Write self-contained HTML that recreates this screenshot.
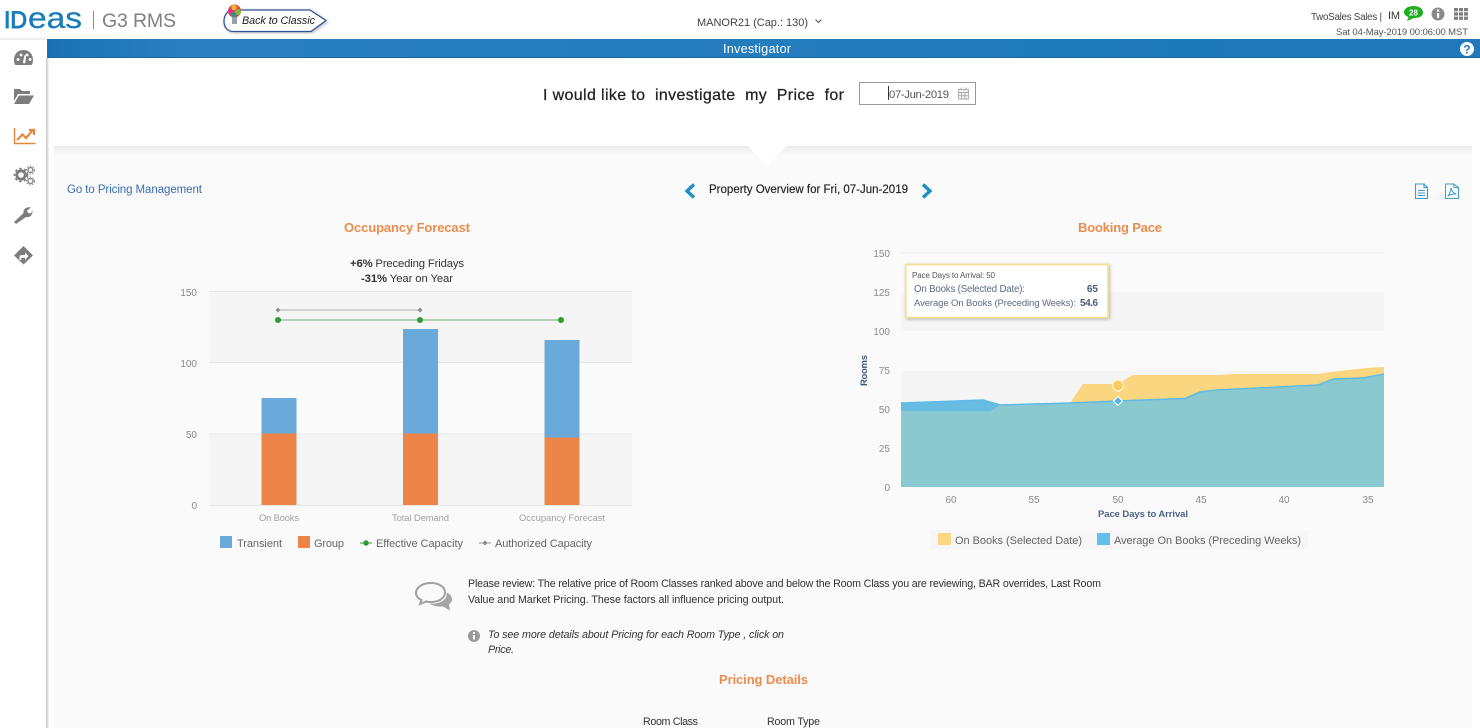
<!DOCTYPE html>
<html><head><meta charset="utf-8"><title>Investigator</title>
<style>html,body{margin:0;padding:0;background:#fff;width:1480px;height:728px;overflow:hidden}svg{display:block}text{font-family:"Liberation Sans",sans-serif}</style></head>
<body>
<svg width="1480" height="728" viewBox="0 0 1480 728" xmlns="http://www.w3.org/2000/svg">
<defs>
<linearGradient id="bar" x1="0" x2="1" y1="0" y2="0"><stop offset="0" stop-color="#1a72b4"/><stop offset=".1" stop-color="#2a80c0"/><stop offset=".5" stop-color="#237cbd"/><stop offset=".8" stop-color="#1d78ba"/><stop offset="1" stop-color="#2179ba"/></linearGradient>
<linearGradient id="top" x1="0" x2="0" y1="0" y2="1"><stop offset="0" stop-color="#ececec"/><stop offset="1" stop-color="#fafafa"/></linearGradient>
<linearGradient id="side" x1="0" x2="1" y1="0" y2="0"><stop offset="0" stop-color="#c4c4c4"/><stop offset="1" stop-color="#f8f8f8"/></linearGradient>
<filter id="sh" x="-5%" y="-10%" width="110%" height="120%"><feDropShadow dx="1" dy="1" stdDeviation="1.500" flood-color="#000" flood-opacity=".3"/></filter>
</defs>
<rect x="54" y="146" width="1418" height="582" fill="#fafafa"/>
<rect x="54" y="146" width="1418" height="10" fill="url(#top)"/>
<polygon points="747,145 787,145 767,166" fill="#fff"/>
<rect x="46" y="58" width="3" height="670" fill="url(#side)"/>
<rect x="47" y="39" width="1433" height="19" fill="url(#bar)"/>
<rect x="47" y="57" width="1433" height="1" fill="#16679f"/>
<rect x="0" y="38" width="47" height="2" fill="#efefef"/>

<!-- header -->
<text x="4" y="28" font-size="24.500" fill="#1b7cb8" stroke="#1b7cb8" stroke-width="1" textLength="23" lengthAdjust="spacingAndGlyphs">ID</text>
<text x="28" y="28" font-size="30" fill="#1b7cb8" stroke="#1b7cb8" stroke-width=".3" textLength="54" lengthAdjust="spacingAndGlyphs">eas</text>
<rect x="93" y="11" width="1" height="18" fill="#8d8d8d"/>
<text x="102" y="27" font-size="19.500" fill="#808080" textLength="74">G3 RMS</text>
<path d="M233 10H310L326 20.500L311 31.500H234C227 31.500 224 27 224 21C224 15 228 10 233 10Z" fill="#fff" stroke="#2f5298" stroke-width="1.300" filter="url(#sh)"/>
<circle cx="234.500" cy="11" r="6.500" fill="#e8483f"/><circle cx="231" cy="11" r="3" fill="#d43a8a"/><circle cx="238" cy="12" r="3" fill="#7bbd44"/><circle cx="234" cy="7.500" r="2.700" fill="#f6b52e"/><circle cx="234" cy="15" r="2.500" fill="#1c9a8a"/>
<rect x="232" y="17" width="5" height="7" fill="#9aa0a8"/>
<text x="242" y="24" font-size="10.800" font-style="italic" fill="#1d1d1d" textLength="73">Back to Classic</text>
<text x="697" y="26" font-size="11" fill="#444" textLength="111">MANOR21 (Cap.: 130)</text>
<path d="M815.500 19.500L818.500 22.500L821.500 19.500" fill="none" stroke="#555" stroke-width="1"/>
<text x="1311" y="20" font-size="9.800" fill="#444" textLength="71">TwoSales Sales |</text>
<text x="1388" y="19" font-size="11" fill="#333" textLength="12">IM</text>
<path d="M1413.500 6C1419 6 1423 8.500 1423 12.500C1423 16.500 1419 18 1414 18L1407 21L1408.500 17C1405.500 16 1404 14.500 1404 12C1404 8.500 1408 6 1413.500 6Z" fill="#1fae1f"/>
<text x="1413.500" y="15.500" font-size="8" font-weight="bold" fill="#fff" text-anchor="middle">28</text>
<circle cx="1438" cy="14" r="6.500" fill="#8a8a8a"/><rect x="1437" y="13" width="2.200" height="5" fill="#fff"/><rect x="1437" y="9.500" width="2.200" height="2.200" fill="#fff"/>
<path d="M1454 8h4v3.300h-4zM1459 8h4v3.300h-4zM1464 8h4v3.300h-4zM1454 12.300h4v3.300h-4zM1459 12.300h4v3.300h-4zM1464 12.300h4v3.300h-4zM1454 16.600h4v3.300h-4zM1459 16.600h4v3.300h-4zM1464 16.600h4v3.300h-4z" fill="#808080"/>
<text x="1336" y="35" font-size="9.500" fill="#555" textLength="132">Sat 04-May-2019 00:06:00 MST</text>
<text x="723" y="53" font-size="12.800" fill="#fff" textLength="68">Investigator</text>
<circle cx="1467" cy="49" r="7" fill="#fff"/><text x="1467" y="53.500" font-size="12" font-weight="bold" fill="#1d78ba" text-anchor="middle">?</text>

<!-- sidebar -->
<path fill-rule="evenodd" d="M23.500 50C17.500 50 14 54.500 14 60C14 62.500 14.500 64 15.500 65H31.500C32.500 64 33 62.500 33 60C33 54.500 29.500 50 23.500 50ZM24.500 55L23 62C22.500 63.500 25 64 25.500 62.500L26 55.500ZM18 58a1.500 1.500 0 1 0 .1 0ZM21 53.500a1.500 1.500 0 1 0 .1 0ZM27 53.500a1.500 1.500 0 1 0 .1 0ZM30 58a1.500 1.500 0 1 0 .1 0Z" fill="#7d7d7d"/>
<path d="M14 89H20L22 91H30V94H18L14 101ZM19 95.500H34L29 104H14Z" fill="#7d7d7d"/>
<path d="M14.500 128V143.500H35.500" fill="none" stroke="#e2873f" stroke-width="1.400"/>
<path d="M17 140L22.500 134.500L26 138L32 131M29 130H34V135" fill="none" stroke="#e2873f" stroke-width="2.200"/>
<circle cx="21" cy="175" r="4.200" fill="none" stroke="#7d7d7d" stroke-width="2.800"/><circle cx="21" cy="175" r="6.500" fill="none" stroke="#7d7d7d" stroke-width="1.600" stroke-dasharray="2.400 2.400"/>
<circle cx="30.500" cy="170" r="2.500" fill="none" stroke="#8a8a8a" stroke-width="1.500"/><circle cx="30.500" cy="170" r="4" fill="none" stroke="#8a8a8a" stroke-width="1" stroke-dasharray="1.500 1.500"/>
<circle cx="30.500" cy="181" r="2.500" fill="none" stroke="#8a8a8a" stroke-width="1.500"/><circle cx="30.500" cy="181" r="4" fill="none" stroke="#8a8a8a" stroke-width="1" stroke-dasharray="1.500 1.500"/>
<path d="M16 224L14 222L23.500 213C23 209.500 26 206.500 31 207.500L27 210.500L28 213L31 213.500L32.500 210.500C33 215 29.500 218 26 217Z" fill="#7d7d7d"/>
<path fill-rule="evenodd" d="M23.500 246L33 255.500L23.500 264.500L14 255.500ZM19.500 258V260H21.300V257.800H25V260L28.500 256L25 252.500V255H22C20 255 19.500 256 19.500 258Z" fill="#7d7d7d"/>

<!-- investigate row -->
<text x="543" y="100" font-size="16" fill="#222" stroke="#222" stroke-width=".25" textLength="301" xml:space="preserve">I would like to  investigate  my  Price  for</text>
<rect x="859.500" y="82.500" width="116" height="22" fill="#fff" stroke="#999"/>
<rect x="888" y="86" width="1" height="14" fill="#333"/>
<text x="889" y="98" font-size="11.300" fill="#555" textLength="60">07-Jun-2019</text>
<path d="M958.500 89.500h10v9.500h-10zM958.500 92.500h10M961.500 92.500v6.500M965 92.500v6.500M958.500 95.700h10M961 87.500v2.500M966 87.500v2.500" fill="#f2f2f2" stroke="#aaa" stroke-width=".9"/>

<!-- nav row -->
<text x="67" y="193" font-size="11.500" fill="#3a6db2" textLength="135">Go to Pricing Management</text>
<path d="M694 184.500L687 191L694 197.500" fill="none" stroke="#1f8fc4" stroke-width="3.400"/>
<text x="709" y="193" font-size="11.500" fill="#222" stroke="#222" stroke-width=".15" textLength="199">Property Overview for Fri, 07-Jun-2019</text>
<path d="M923 184.500L930 191L923 197.500" fill="none" stroke="#1f8fc4" stroke-width="3.400"/>
<path d="M1415.500 184H1424L1427.500 187.500V198.500H1415.500ZM1424 184V187.500H1427.500M1418 190.500H1425M1418 193H1425M1418 195.500H1425" fill="none" stroke="#3f9ccb" stroke-width="1.100"/>
<path d="M1445.500 184H1454L1458.500 187.500V198.500H1445.500ZM1454 184V187.500H1458.500M1448 196C1450 193 1451 190 1451 188C1452 191 1453 193 1456 194C1453 194 1450 194.500 1448 196Z" fill="none" stroke="#3f9ccb" stroke-width="1"/>

<!-- left chart -->
<text x="344" y="232" font-size="13" font-weight="bold" fill="#ea8d4e" textLength="126">Occupancy Forecast</text>
<text x="350" y="267" font-size="11.300" fill="#333" textLength="114"><tspan font-weight="bold">+6%</tspan> Preceding Fridays</text>
<text x="361" y="282" font-size="11.300" fill="#333" textLength="92"><tspan font-weight="bold">-31%</tspan> Year on Year</text>
<rect x="209" y="291" width="423" height="71.500" fill="#f5f5f5"/>
<rect x="209" y="362.500" width="423" height="71.500" fill="#fafafa"/>
<rect x="209" y="434" width="423" height="71.500" fill="#f5f5f5"/>
<path d="M209 291.500H632M209 362.500H632M209 434H632M209 505.500H632" stroke="#e8e8e8" stroke-width="1"/>
<g font-size="10" fill="#8a8a8a" text-anchor="end"><text x="197" y="296">150</text><text x="197" y="367">100</text><text x="197" y="438">50</text><text x="197" y="509">0</text></g>
<rect x="261.500" y="398" width="35" height="35.500" fill="#6aaadb"/><rect x="261.500" y="433.500" width="35" height="71.500" fill="#ec8547"/>
<rect x="403" y="329" width="35" height="104.500" fill="#6aaadb"/><rect x="403" y="433.500" width="35" height="71.500" fill="#ec8547"/>
<rect x="544.500" y="340" width="35" height="97.500" fill="#6aaadb"/><rect x="544.500" y="437.500" width="35" height="67.500" fill="#ec8547"/>
<path d="M278 310H420" stroke="#bdbdbd" stroke-width="1.200"/>
<path d="M278 320H561" stroke="#8fbc8f" stroke-width="1.200"/>
<path d="M278 307.500L280.500 310L278 312.500L275.500 310ZM420 307.500L422.500 310L420 312.500L417.500 310Z" fill="#8e8e8e"/>
<circle cx="278" cy="320" r="3" fill="#2e9c35"/><circle cx="420" cy="320" r="3" fill="#2e9c35"/><circle cx="561" cy="320" r="3" fill="#2e9c35"/>
<g font-size="9.400" fill="#a2a2a2"><text x="259" y="521" textLength="40">On Books</text><text x="392" y="521" textLength="57">Total Demand</text><text x="519" y="521" textLength="86">Occupancy Forecast</text></g>
<rect x="220" y="536" width="12" height="12" fill="#6aaadb"/>
<rect x="298" y="536" width="12" height="12" fill="#ec8547"/>
<path d="M360 543H372" stroke="#2e9c35"/><circle cx="366" cy="543" r="2.700" fill="#2e9c35"/>
<path d="M479 543H491" stroke="#999"/><path d="M485 540.500L487.500 543L485 545.500L482.500 543Z" fill="#888"/>
<g font-size="11" fill="#666"><text x="237" y="547" textLength="45">Transient</text><text x="314" y="547" textLength="30">Group</text><text x="376" y="547" textLength="87">Effective Capacity</text><text x="495" y="547" textLength="97">Authorized Capacity</text></g>

<!-- right chart -->
<text x="1078" y="232" font-size="13" font-weight="bold" fill="#ea8d4e" textLength="84">Booking Pace</text>
<rect x="901" y="292" width="483" height="39" fill="#f5f5f5"/>
<rect x="901" y="371" width="483" height="38" fill="#f5f5f5"/>
<path d="M901 253H1384" stroke="#efefef"/>
<g font-size="10" fill="#8a8a8a" text-anchor="end"><text x="890" y="257">150</text><text x="890" y="296">125</text><text x="890" y="335">100</text><text x="890" y="374">75</text><text x="890" y="413">50</text><text x="890" y="452">25</text><text x="890" y="491">0</text></g>
<polygon points="1070,403 1083,384 1117,384 1133,375 1220,375 1233,374 1317,374 1347,370 1367,368 1384,367 1384,390 1070,410" fill="#f9d67f"/>
<polygon points="901,403 983,400 1000,405 1000,411 901,411" fill="#68bce2"/>
<polygon points="901,411 990,411 1000,405 1070,403 1117,401 1185,398.500 1200,392 1217,390 1318,385 1333,379 1363,378 1384,374 1384,487 901,487" fill="#89c9cf"/>
<polyline points="901,403 983,400 1000,405 1070,403 1117,401 1185,398.500 1200,392 1217,390 1318,385 1333,379 1363,378 1384,374" fill="none" stroke="#5fbbe6" stroke-width="1.500"/>
<circle cx="1118" cy="385.500" r="5.500" fill="#f7cd62" stroke="#fdf0c4" stroke-width="1.500"/>
<path d="M1118 396.500L1122.500 401L1118 405.500L1113.500 401Z" fill="#58b5e3" stroke="#fff" stroke-width="1"/>
<rect x="906" y="264.500" width="202" height="53" fill="#fff" stroke="#f5dd8e" stroke-width="1.500" filter="url(#sh)"/>
<text x="912" y="278" font-size="8" fill="#555" textLength="83">Pace Days to Arrival: 50</text>
<text x="914" y="292" font-size="9.700" fill="#5a6b82" textLength="111">On Books (Selected Date):</text>
<text x="1098" y="292" font-size="10" font-weight="bold" fill="#4a5c78" text-anchor="end">65</text>
<text x="914" y="306" font-size="9.500" fill="#5a6b82" textLength="162">Average On Books (Preceding Weeks):</text>
<text x="1080" y="306" font-size="10" font-weight="bold" fill="#4a5c78" textLength="18">54.6</text>
<text transform="translate(867,386) rotate(-90)" font-size="9.500" font-weight="bold" fill="#3f5a80" textLength="31">Rooms</text>
<g font-size="10" fill="#8a8a8a" text-anchor="middle"><text x="951" y="503">60</text><text x="1034" y="503">55</text><text x="1118" y="503">50</text><text x="1201" y="503">45</text><text x="1284" y="503">40</text><text x="1368" y="503">35</text></g>
<text x="1098" y="517" font-size="9.500" font-weight="bold" fill="#4d6488" textLength="90">Pace Days to Arrival</text>
<rect x="930" y="530" width="378" height="19" fill="#f6f6f6"/>
<rect x="938" y="533" width="13" height="12" fill="#fbd983"/>
<rect x="1097" y="533" width="13" height="12" fill="#62c0ea"/>
<g font-size="11" fill="#666"><text x="955" y="544" textLength="127">On Books (Selected Date)</text><text x="1114" y="544" textLength="187">Average On Books (Preceding Weeks)</text></g>

<!-- notes -->
<path d="M416 593C416 587 423 583 431 583C439 583 445 587 445 592.500C445 598 439 602 431 602C429 602 428 602 426 601.500L420 604L421.500 600C418 598.500 416 596 416 593Z" fill="#fafafa" stroke="#a0a0a0" stroke-width="2"/>
<path d="M446.500 592.500C450 594 452 596.500 452 599C452 601.500 451 603 449 604.500L450 610.500L443 606.500C439 607 433 606 429 603.500C438 604.500 448 601 446.500 592.500Z" fill="#a5a5a5"/>
<text x="468" y="587" font-size="10.700" fill="#333" textLength="633">Please review: The relative price of Room Classes ranked above and below the Room Class you are reviewing, BAR overrides, Last Room</text>
<text x="468" y="603" font-size="10.700" fill="#333" textLength="316">Value and Market Pricing. These factors all influence pricing output.</text>
<circle cx="474" cy="636" r="6" fill="#999"/><rect x="473" y="635" width="2" height="4.500" fill="#fff"/><rect x="473" y="632" width="2" height="2" fill="#fff"/>
<text x="488" y="638" font-size="10.700" font-style="italic" fill="#333" textLength="296">To see more details about Pricing for each Room Type , click on</text>
<text x="488" y="653" font-size="10.700" font-style="italic" fill="#333" textLength="26">Price.</text>
<text x="719" y="684" font-size="13" font-weight="bold" fill="#ea8d4e" textLength="89">Pricing Details</text>
<text x="643" y="725" font-size="10.700" fill="#333" textLength="55">Room Class</text>
<text x="767" y="725" font-size="10.700" fill="#333" textLength="53">Room Type</text>
</svg>
</body></html>
